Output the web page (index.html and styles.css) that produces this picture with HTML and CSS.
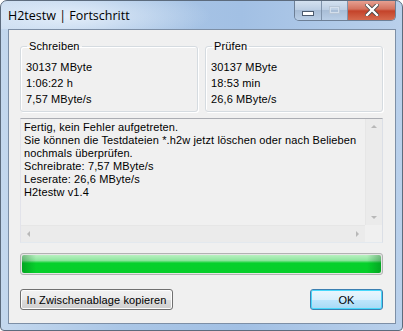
FILE: index.html
```html
<!DOCTYPE html>
<html>
<head>
<meta charset="utf-8">
<link rel="stylesheet" href="styles.css">
</head>
<body>
<div class="window">
  <div class="titlebar">
    <div class="title">H2testw | Fortschritt</div>
    <div class="caption-buttons">
      <div class="cbtn cmin"><span class="min-glyph"></span></div>
      <div class="cbtn cmax"><span class="max-glyph"></span></div>
      <div class="cbtn cclose">
        <svg width="14" height="12" viewBox="0 0 14 12"><path d="M2 1 L12 11 M12 1 L2 11" stroke="#444" stroke-width="4" stroke-linecap="square"/><path d="M2 1 L12 11 M12 1 L2 11" stroke="#fff" stroke-width="2.4" stroke-linecap="square"/></svg>
      </div>
    </div>
  </div>
  <div class="frame">
    <div class="client">
      <div class="groups">
        <fieldset class="group">
          <legend>Schreiben</legend>
          <div class="line">30137 MByte</div>
          <div class="line">1:06:22 h</div>
          <div class="line">7,57 MByte/s</div>
        </fieldset>
        <fieldset class="group">
          <legend>Prüfen</legend>
          <div class="line">30137 MByte</div>
          <div class="line">18:53 min</div>
          <div class="line">26,6 MByte/s</div>
        </fieldset>
      </div>
      <div class="editbox">
        <div class="edit-main">
          <div class="edit-text">
            <div>Fertig, kein Fehler aufgetreten.</div>
            <div>Sie können die Testdateien *.h2w jetzt löschen oder nach Belieben</div>
            <div>nochmals überprüfen.</div>
            <div>Schreibrate: 7,57 MByte/s</div>
            <div>Leserate: 26,6 MByte/s</div>
            <div>H2testw v1.4</div>
          </div>
          <div class="vscroll">
            <span class="arrow up"></span>
            <span class="arrow down"></span>
          </div>
        </div>
        <div class="hrow">
          <div class="hscroll">
            <span class="arrow left"></span>
            <span class="arrow right"></span>
          </div>
          <div class="corner"></div>
        </div>
      </div>
      <div class="progress"><div class="fill"></div></div>
      <div class="buttons">
        <button class="btn copy">In Zwischenablage kopieren</button>
        <button class="btn ok">OK</button>
      </div>
    </div>
  </div>
</div>
</body>
</html>
```
FILE: styles.css
```css
html, body {
  margin: 0;
  padding: 0;
  background: #ffffff;
}
body {
  width: 403px;
  height: 331px;
  overflow: hidden;
  font-family: "Liberation Sans", Arial, sans-serif;
}
.window {
  width: 403px;
  height: 331px;
  box-sizing: border-box;
  border: 1px solid #5c6b7d;
  border-radius: 7px 7px 4px 4px;
  background: linear-gradient(to right, #c4d8ee 0%, #aac6e6 30%, #a2c0e4 60%, #b9d0eb 100%);
  display: flex;
  flex-direction: column;
  overflow: hidden;
}
.titlebar {
  height: 28px;
  display: flex;
  justify-content: space-between;
  align-items: flex-start;
  background: radial-gradient(ellipse 140px 30px at 70px 15px, rgba(235,243,252,0.85), rgba(235,243,252,0) 100%);
}
.title {
  font-family: "Open Sans", "Liberation Sans", sans-serif;
  font-size: 12.5px;
  color: #000;
  padding: 6px 0 0 7px;
  letter-spacing: 0px;
}
.caption-buttons {
  display: flex;
  margin-right: 6px;
  margin-top: -1px;
  height: 20px;
  border: 1px solid #6d7f96;
  border-top: none;
  border-radius: 0 0 5px 5px;
  overflow: hidden;
}
.cbtn {
  height: 20px;
  display: flex;
  align-items: center;
  justify-content: center;
  box-sizing: border-box;
}
.cmin {
  width: 27px;
  background: linear-gradient(#d6e3f1, #bccee3 50%, #a8bdd6 51%, #b9cee6);
  border-right: 1px solid #7f93ab;
}
.cmax {
  width: 26px;
  background: linear-gradient(#d6e3f1, #bccee3 50%, #a8bdd6 51%, #b9cee6);
  border-right: 1px solid #7f93ab;
}
.cclose {
  width: 47px;
  background: linear-gradient(#e8a597, #d4735f 45%, #c4432a 55%, #d56a4e);
}
.min-glyph {
  width: 10px;
  height: 3px;
  background: #fff;
  border: 1px solid #4b5a6e;
  margin-top: 6px;
}
.max-glyph {
  width: 9px;
  height: 6px;
  border: 1px solid #b8c6d6;
  box-shadow: inset 0 0 0 1px #d8e2ee;
  opacity: 0.9;
}
.frame {
  flex: 1;
  padding: 0 6px 6px 7px;
  display: flex;
}
.client {
  flex: 1;
  background: #f0f0f0;
  border: 1px solid #7d8fa6;
  padding: 10px 12px 0 11px;
  display: flex;
  flex-direction: column;
  font-size: 11px;
  color: #000;
  letter-spacing: 0.12px;
}
.groups {
  display: flex;
  gap: 7px;
  height: 72px;
}
.group {
  margin: 0;
  flex: 1;
  border: 1px solid #d5dbe0;
  border-radius: 3px;
  box-shadow: inset 1px 1px 0 #fff, 1px 1px 0 #fff;
  padding: 7px 0 0 5px;
  min-width: 0;
}
.group legend {
  padding: 0 2px;
  margin-left: 1px;
  font-size: 11px;
}
.line {
  height: 16px;
  line-height: 16px;
}
.editbox {
  margin-top: 6px;
  height: 125px;
  box-sizing: border-box;
  border: 1px solid #abadb3;
  border-color: #abadb3 #dbdfe6 #e3e9ef #e2e3ea;
  display: flex;
  flex-direction: column;
  background: #f0f0f0;
}
.edit-main {
  flex: 1;
  display: flex;
  min-height: 0;
}
.edit-text {
  flex: 1;
  padding: 2px 0 0 3px;
  line-height: 13px;
  white-space: nowrap;
  overflow: hidden;
}
.vscroll {
  width: 17px;
  background: #ebebeb;
  border-left: 1px solid #e6e6e6;
  display: flex;
  flex-direction: column;
  justify-content: space-between;
  align-items: center;
  padding: 6px 0;
  box-sizing: border-box;
}
.hrow {
  height: 17px;
  display: flex;
}
.hscroll {
  flex: 1;
  background: #ebebeb;
  border-top: 1px solid #e6e6e6;
  display: flex;
  justify-content: space-between;
  align-items: center;
  padding: 0 6px;
}
.corner {
  width: 17px;
  background: #f0f0f0;
}
.arrow {
  width: 0;
  height: 0;
  border: 3px solid transparent;
}
.arrow.up { border-bottom: 3px solid #b8b8b8; border-top-width: 0; }
.arrow.down { border-top: 3px solid #b8b8b8; border-bottom-width: 0; }
.arrow.left { border-right: 3px solid #b8b8b8; border-left-width: 0; }
.arrow.right { border-left: 3px solid #b8b8b8; border-right-width: 0; }
.progress {
  margin-top: 10px;
  height: 22px;
  box-sizing: border-box;
  border: 1px solid #b2b2b2;
  border-radius: 3px;
  background: #e6e6e6;
  padding: 1px;
}
.fill {
  height: 100%;
  border-radius: 2px;
  background:
    linear-gradient(to right, rgba(0,90,20,0.35) 0px, rgba(0,90,20,0) 14px, rgba(0,90,20,0) calc(100% - 14px), rgba(0,90,20,0.35) 100%),
    linear-gradient(#b8f0c0 0%, #8ee69e 30%, #06d02b 45%, #06cf2a 100%);
}
.buttons {
  margin-top: 14px;
  display: flex;
  justify-content: space-between;
}
.btn {
  height: 21px;
  font-family: "Liberation Sans", Arial, sans-serif;
  font-size: 11px;
  letter-spacing: 0.12px;
  color: #000;
  border: 1px solid #707070;
  border-radius: 3px;
  background: linear-gradient(#f2f2f2 0%, #ebebeb 50%, #dddddd 51%, #cfcfcf 100%);
  box-shadow: inset 0 0 0 1px #fcfcfc;
  padding: 0;
  margin: 0;
  white-space: nowrap;
}
.copy {
  width: 153px;
}
.ok {
  width: 73px;
  border-color: #3c7fb1;
  background: linear-gradient(#eaf6fd 0%, #d9f0fc 50%, #bee6fd 51%, #a7d9f5 100%);
  box-shadow: inset 0 0 0 1px #48d8fb;
}
```
